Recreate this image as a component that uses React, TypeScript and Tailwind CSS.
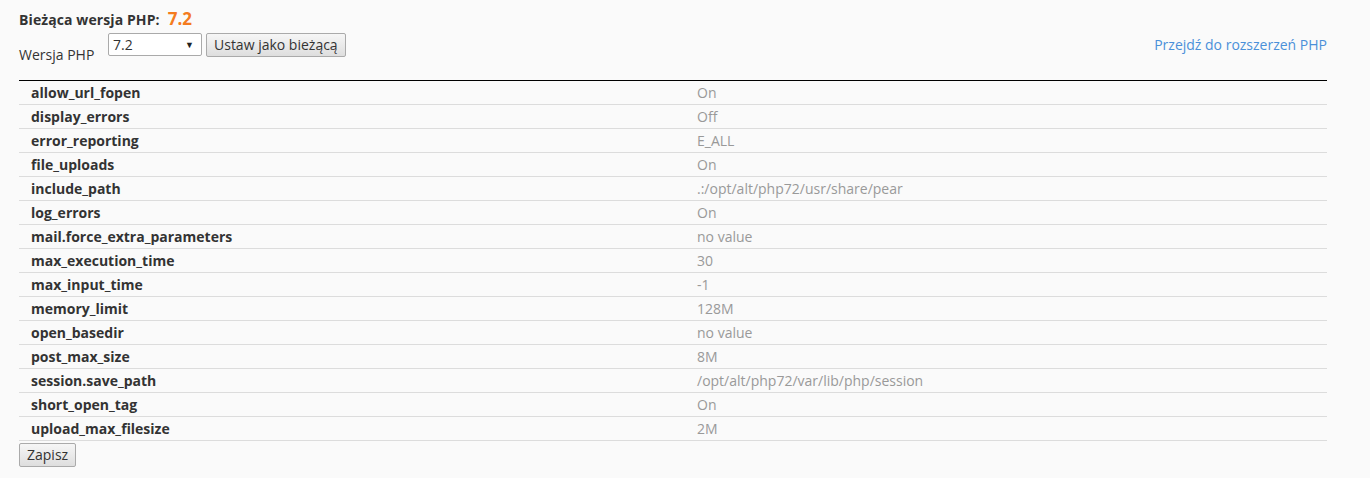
const settings: [string, string][] = [
  ['allow_url_fopen', 'On'],
  ['display_errors', 'Off'],
  ['error_reporting', 'E_ALL'],
  ['file_uploads', 'On'],
  ['include_path', '.:/opt/alt/php72/usr/share/pear'],
  ['log_errors', 'On'],
  ['mail.force_extra_parameters', 'no value'],
  ['max_execution_time', '30'],
  ['max_input_time', '-1'],
  ['memory_limit', '128M'],
  ['open_basedir', 'no value'],
  ['post_max_size', '8M'],
  ['session.save_path', '/opt/alt/php72/var/lib/php/session'],
  ['short_open_tag', 'On'],
  ['upload_max_filesize', '2M'],
];

export default function App() {
  return (
    <div
      className="min-h-[478px] bg-[#fafafa] text-[14px] text-[#333]"
      style={{ fontFamily: '"Open Sans", "Liberation Sans", sans-serif' }}
    >
      <div className="ml-[19px] w-[1308px] pt-[6px]">
        {/* Current version */}
        <div className="flex items-baseline gap-[8px] h-[22px]">
          <span className="font-bold tracking-[0.1px]">Bieżąca wersja PHP:</span>
          <span className="font-bold text-[17px] text-[#f47b20]">7.2</span>
        </div>

        {/* Version picker */}
        <div className="flex items-start justify-between mt-[5px] h-[47px]">
          <div className="flex items-start">
            <span className="mt-[11px] w-[89px]">Wersja PHP</span>
            <div className="flex items-center w-[94px] h-[23px] border border-[#aaa] bg-[#fff] rounded-[2px] pl-[4px] pr-[7px] text-[14px]">
              <span className="flex-1">7.2</span>
              <span className="text-[9px] text-[#222]">▼</span>
            </div>
            <button className="ml-[4px] h-[24px] px-[7px] border border-[#aaa] rounded-[2px] bg-gradient-to-b from-[#f6f6f6] to-[#dedede] text-[14px] text-[#333] leading-none">
              Ustaw jako bieżącą
            </button>
          </div>
          <a className="mt-[1px] text-[#4a90d9]">Przejdź do rozszerzeń PHP</a>
        </div>

        {/* Settings table */}
        <div className="border-t border-black">
          {settings.map(([k, v]) => (
            <div key={k} className="flex h-[24px] items-center border-b border-[#dcdcdc]">
              <span className="w-[678px] pl-[12px] font-bold text-[#333]">{k}</span>
              <span className="text-[#999]">{v}</span>
            </div>
          ))}
        </div>

        <button className="mt-[2px] h-[24px] px-[7px] border border-[#aaa] rounded-[2px] bg-gradient-to-b from-[#f6f6f6] to-[#dedede] text-[14px] text-[#333] leading-none">
          Zapisz
        </button>
      </div>
    </div>
  );
}
